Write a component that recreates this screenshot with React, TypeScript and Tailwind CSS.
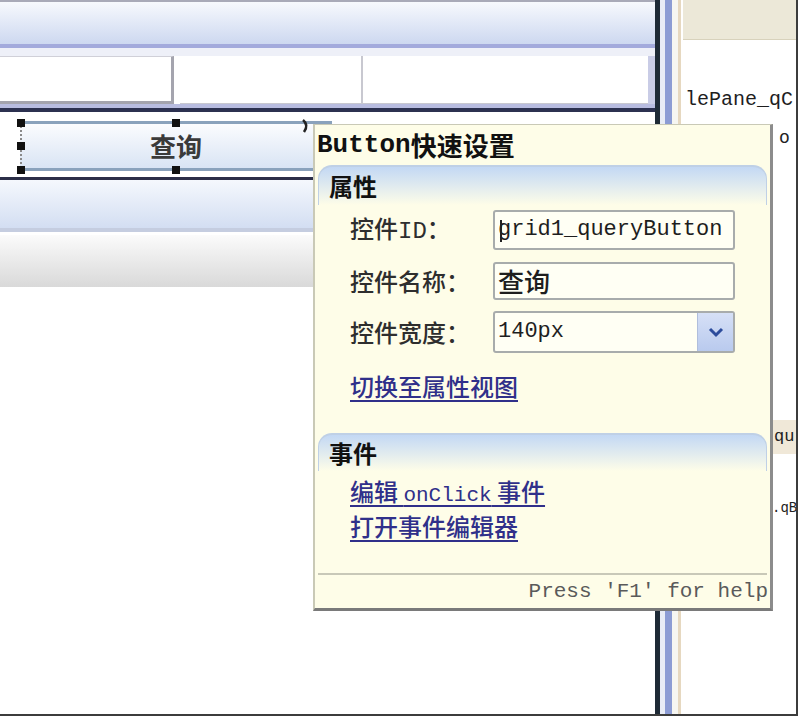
import React from "react";

const MONO = { fontFamily: '"Liberation Mono", "Noto Sans CJK SC", monospace' } as const;
const CJK = { fontFamily: '"Noto Sans CJK SC", "Liberation Mono", sans-serif' } as const;

function Handle({ x, y }: { x: number; y: number }) {
  return (
    <div
      className="absolute w-[8px] h-[8px] bg-[#111]"
      style={{ left: x - 4, top: y - 4 }}
    />
  );
}

function Field({ label, children }: { label: React.ReactNode; children: React.ReactNode }) {
  return (
    <div className="flex items-center h-[40px]">
      <div className="w-[175px] shrink-0 pl-[32px] text-[24px] text-[#2e2e2e] font-medium leading-none whitespace-nowrap" style={CJK}>
        {label}
      </div>
      {children}
    </div>
  );
}

export default function App() {
  return (
    <div className="relative w-[800px] h-[718px] bg-white overflow-hidden" style={CJK}>
      <div className="flex h-[716px] w-[798px] border-b-2 border-r-2 border-[#3c3c3c]">
        {/* design canvas */}
        <div className="w-[655px] shrink-0 flex flex-col">
          <div className="h-[2px] bg-[#a9aab8]" />
          <div className="h-[42px] bg-gradient-to-b from-[#f7f9fd] to-[#cdd8f0]" />
          <div className="h-[4px] bg-[#a3aadc]" />
          <div className="h-[8px] bg-[#eef0f8]" />
          <div className="h-[48px] flex bg-white">
            <div className="w-[174px] border-r-[3px] border-b-[3px] border-t border-[#a4a4ae] border-t-[#d0d0d8] bg-white" />
            <div className="w-[6px]" />
            <div className="w-[183px] border-r-2 border-b border-[#c8c8d0] bg-white" />
            <div className="flex-1 border-b border-[#c8c8d0] bg-white" />
            <div className="w-[7px] bg-[#c9cce6]" />
          </div>
          <div className="h-[4px] bg-[#b8bce0]" />
          <div className="h-[4px] bg-[#2c3150]" />
          {/* button row */}
          <div className="h-[65px] relative bg-white">
            <div className="absolute left-[20px] top-[9px] w-[312px] h-[50px] border-y-[3px] border-[#8aa2bc] bg-gradient-to-b from-[#fbfcfe] to-[#d9e4f4] flex items-center justify-center">
              <span className="text-[26px] font-bold text-[#3a3a3a] leading-none" style={CJK}>查询</span>
            </div>
            <div className="absolute left-[20px] top-[14px] h-[42px] border-l-2 border-dotted border-[#8a8a8a]" />
            <Handle x={21} y={11} />
            <Handle x={21} y={34} />
            <Handle x={21} y={58} />
            <Handle x={176} y={11} />
            <Handle x={176} y={58} />
            <svg className="absolute left-[301px] top-[6px]" width="10" height="16" viewBox="0 0 10 16">
              <path d="M2 2 Q8 7 3 14" stroke="#222" strokeWidth="2.5" fill="none" />
            </svg>
          </div>
          <div className="h-[3px] bg-[#2b2e48]" />
          <div className="h-[48px] bg-gradient-to-b from-[#f5f8fd] to-[#d3def2]" />
          <div className="h-[4px] bg-[#c5cde0]" />
          <div className="h-[3px] bg-white" />
          <div className="h-[52px] bg-gradient-to-b from-[#fbfbfb] to-[#d9d9d9]" />
          <div className="flex-1 bg-white" />
        </div>
        {/* separator lines */}
        <div className="w-[28px] shrink-0 flex">
          <div className="w-[5px] bg-[#1e2a36]" />
          <div className="w-[5px] bg-[#e8ecf6]" />
          <div className="w-[7px] bg-[#8c9cd4]" />
          <div className="w-[6px] bg-[#f6f6f2]" />
          <div className="w-[3px] bg-[#e6d8c0]" />
          <div className="w-[2px] bg-white" />
        </div>
        {/* right property panel */}
        <div className="flex-1 flex flex-col overflow-hidden bg-white">
          <div className="h-[40px] bg-[#ece8d8] border-b border-[#d8d2bc]" />
          <div className="h-[46px]" />
          <div className="h-[28px] pl-[2px] text-[20px] text-[#1e1e1e] whitespace-nowrap leading-[28px]" style={MONO}>lePane_qC</div>
          <div className="h-[12px]" />
          <div className="h-[24px] pl-[96px] text-[18px] text-[#222] leading-[24px] whitespace-nowrap" style={MONO}>o</div>
          <div className="h-[270px]" />
          <div className="h-[34px] bg-[#f0e8d8] pl-[91px] text-[17px] text-[#222] leading-[34px] whitespace-nowrap" style={MONO}>qu</div>
          <div className="h-[40px]" />
          <div className="h-[28px] pl-[89px] text-[14px] text-[#222] leading-[28px] whitespace-nowrap" style={MONO}>.qB</div>
          <div className="flex-1" />
        </div>
      </div>

      {/* smart tag popup */}
      <div className="absolute left-[313px] top-[124px] w-[460px] h-[487px] bg-[#fefde8] border-l-2 border-t border-r-[3px] border-b-[3px] border-[#c9c9b6] border-r-[#8c8c8c] border-b-[#7a7a7a] flex flex-col">
        <div className="h-[40px] flex items-center pl-[2px] text-[26px] font-bold text-[#111] leading-none whitespace-nowrap" style={MONO}>
          Button<span style={CJK}>快速设置</span>
        </div>
        {/* 属性 section */}
        <div className="mx-[3px] h-[40px] rounded-t-[14px] border-t-2 border-x border-[#bfd0e6] bg-gradient-to-b from-[#c3d8f4] to-[#fefde8] flex items-center pl-[10px]">
          <span className="text-[24px] font-bold text-[#111] leading-none" style={CJK}>属性</span>
        </div>
        <div className="mx-[3px] flex flex-col gap-[11px] pt-[5px]">
          <Field label={<>控件<span style={MONO}>ID</span>：</>}>
            <div className="relative shrink-0 w-[242px] h-[40px] border-2 border-[#a8acac] rounded-[3px] bg-[#fffff4] flex items-center pl-[3px] text-[22px] text-[#1e1e1e] leading-none overflow-hidden whitespace-nowrap" style={MONO}>
              grid1_queryButton
              <div className="absolute left-[5px] top-[8px] w-[2px] h-[22px] bg-[#222]" />
            </div>
          </Field>
          <Field label="控件名称：">
            <div className="shrink-0 w-[242px] h-[38px] border-2 border-[#a8acac] rounded-[3px] bg-[#fffff4] flex items-center pl-[3px] text-[26px] font-medium text-[#1e1e1e] leading-none" style={CJK}>
              查询
            </div>
          </Field>
          <Field label="控件宽度：">
            <div className="shrink-0 w-[242px] h-[42px] border-2 border-[#a8acac] rounded-[3px] bg-[#fffff4] flex items-center pl-[3px] text-[22px] text-[#1e1e1e] leading-none" style={MONO}>
              <span className="flex-1">140px</span>
              <div className="w-[36px] h-[38px] bg-gradient-to-b from-[#d6e0f6] to-[#b9caee] border-l border-[#b0bedc] flex items-center justify-center">
                <svg width="16" height="12" viewBox="0 0 16 12">
                  <path d="M2 3 L8 9 L14 3" stroke="#2c4c9c" strokeWidth="3" fill="none" />
                </svg>
              </div>
            </div>
          </Field>
        </div>
        <div className="mx-[3px] pl-[32px] mt-[22px] h-[28px]">
          <span className="text-[24px] font-medium text-[#30308a] underline underline-offset-4 leading-none" style={CJK}>切换至属性视图</span>
        </div>
        <div className="h-[31px]" />
        {/* 事件 section */}
        <div className="mx-[3px] h-[38px] rounded-t-[14px] border-t-2 border-x border-[#bfd0e6] bg-gradient-to-b from-[#c3d8f4] to-[#fefde8] flex items-center pl-[10px]">
          <span className="text-[24px] font-bold text-[#111] leading-none" style={CJK}>事件</span>
        </div>
        <div className="mx-[3px] pl-[32px] flex flex-col gap-[8px] pt-[8px]">
          <span className="h-[27px] text-[24px] font-medium text-[#30308a] underline underline-offset-4 leading-none whitespace-nowrap" style={CJK}>
            编辑 <span className="text-[21px]" style={MONO}>onClick</span> 事件
          </span>
          <span className="h-[27px] text-[24px] font-medium text-[#30308a] underline underline-offset-4 leading-none whitespace-nowrap" style={CJK}>
            打开事件编辑器
          </span>
        </div>
        <div className="flex-1" />
        <div className="mx-[3px] h-[2px] bg-[#c8c8b8]" />
        <div className="h-[33px] flex items-center justify-end pr-[2px] text-[21px] text-[#5a5a5a] leading-none whitespace-nowrap" style={MONO}>
          Press 'F1' for help
        </div>
      </div>
    </div>
  );
}
